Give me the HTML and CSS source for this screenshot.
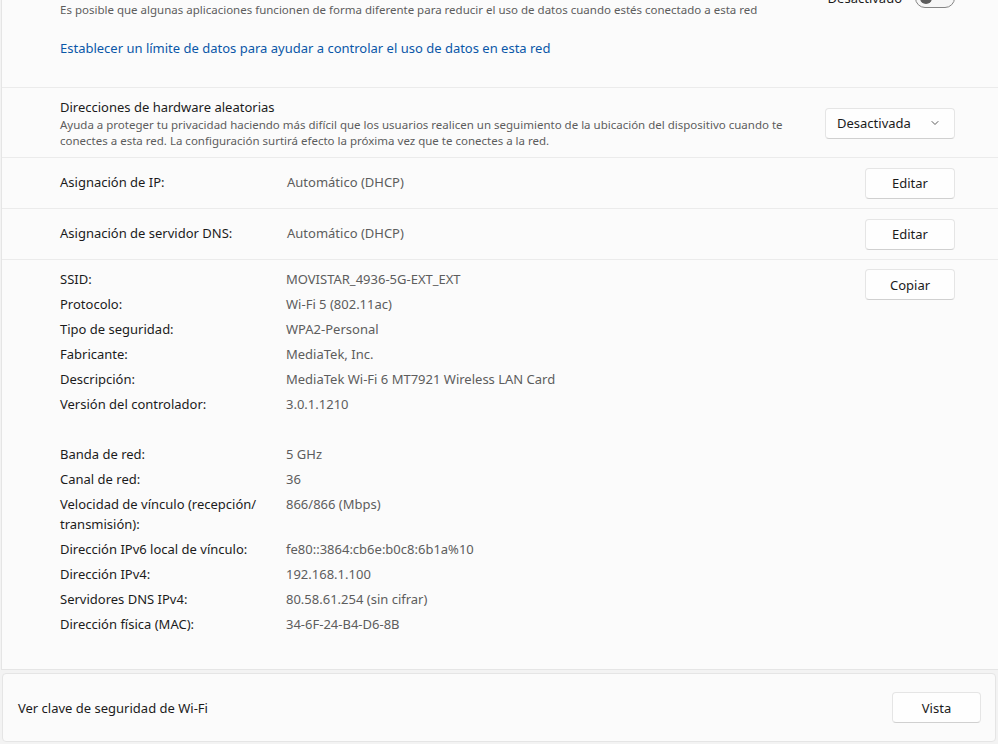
FILE: index.html
```html
<!DOCTYPE html>
<html lang="es">
<head>
  <meta charset="UTF-8" />
  <title>Propiedades de Wi-Fi</title>
  <link rel="stylesheet" href="styles.css">
</head>
<body>
  <div class="panel">
    <!-- Conexión de uso medido -->
    <section class="block metered">
      <div class="row-top">
        <div class="text">
          <div class="title">Conexión de uso medido</div>
          <div class="desc">Es posible que algunas aplicaciones funcionen de forma diferente para reducir el uso de datos cuando estés conectado a esta red</div>
        </div>
        <div class="toggle-wrap">
          <span>Desactivado</span>
          <span class="toggle"><span class="knob"></span></span>
        </div>
      </div>
      <a class="link" href="#">Establecer un límite de datos para ayudar a controlar el uso de datos en esta red</a>
    </section>

    <!-- Direcciones aleatorias -->
    <section class="block hw">
      <div class="text">
        <div class="title">Direcciones de hardware aleatorias</div>
        <div class="desc">Ayuda a proteger tu privacidad haciendo más difícil que los usuarios realicen un seguimiento de la ubicación del dispositivo cuando te<br>conectes a esta red. La configuración surtirá efecto la próxima vez que te conectes a la red.</div>
      </div>
      <button class="select">Desactivada
        <svg width="10" height="10" viewBox="0 0 10 10"><path d="M2 3.5 L5 6.5 L8 3.5" fill="none" stroke="#5d5d5d" stroke-width="1" stroke-linecap="round" stroke-linejoin="round"/></svg>
      </button>
    </section>

    <section class="block line">
      <span class="label">Asignación de IP:</span>
      <span class="value">Automático (DHCP)</span>
      <button class="btn">Editar</button>
    </section>

    <section class="block line">
      <span class="label">Asignación de servidor DNS:</span>
      <span class="value">Automático (DHCP)</span>
      <button class="btn">Editar</button>
    </section>

    <!-- Propiedades -->
    <section class="block props">
      <div class="grid">
        <span class="label">SSID:</span><span class="value">MOVISTAR_4936-5G-EXT_EXT</span>
        <span class="label">Protocolo:</span><span class="value">Wi-Fi 5 (802.11ac)</span>
        <span class="label">Tipo de seguridad:</span><span class="value">WPA2-Personal</span>
        <span class="label">Fabricante:</span><span class="value">MediaTek, Inc.</span>
        <span class="label">Descripción:</span><span class="value">MediaTek Wi-Fi 6 MT7921 Wireless LAN Card</span>
        <span class="label">Versión del controlador:</span><span class="value">3.0.1.1210</span>
        <span class="label spacer"></span><span class="value spacer"></span>
        <span class="label">Banda de red:</span><span class="value">5 GHz</span>
        <span class="label">Canal de red:</span><span class="value">36</span>
        <span class="label">Velocidad de vínculo (recepción/ transmisión):</span><span class="value">866/866 (Mbps)</span>
        <span class="label">Dirección IPv6 local de vínculo:</span><span class="value">fe80::3864:cb6e:b0c8:6b1a%10</span>
        <span class="label">Dirección IPv4:</span><span class="value">192.168.1.100</span>
        <span class="label">Servidores DNS IPv4:</span><span class="value">80.58.61.254 (sin cifrar)</span>
        <span class="label">Dirección física (MAC):</span><span class="value">34-6F-24-B4-D6-8B</span>
      </div>
      <button class="btn copy">Copiar</button>
    </section>
  </div>

  <div class="card">
    <span>Ver clave de seguridad de Wi-Fi</span>
    <button class="btn small">Vista</button>
  </div>
</body>
</html>
```

FILE: styles.css
```css
body {
  margin: 0;
  background: #f3f3f3;
  font-family: "Noto Sans", "Open Sans", sans-serif;
  font-size: 13px;
  color: #1b1b1b;
  overflow: hidden;
}

.panel {
  margin: -19px -2px 0 1px;
  background: #fbfbfb;
  border: 1px solid #e5e5e5;
}

.block {
  border-top: 1px solid #ebebeb;
  padding: 0 44px 0 58px;
}

.block:first-child {
  border-top: none;
}

.title {
  line-height: 20px;
}

.desc {
  font-size: 11.5px;
  line-height: 16px;
  color: #5d5d5d;
}

/* uso medido */
.metered {
  padding-bottom: 29px;
}

.row-top {
  display: flex;
  justify-content: space-between;
  align-items: flex-start;
}

.toggle-wrap {
  display: flex;
  align-items: center;
  gap: 13px;
  margin-top: 6px;
}

.toggle {
  box-sizing: border-box;
  width: 40px;
  height: 20px;
  border: 1px solid #858585;
  border-radius: 10px;
  background: #f6f6f6;
  display: flex;
  align-items: center;
  padding-left: 4px;
}

.knob {
  width: 12px;
  height: 12px;
  border-radius: 50%;
  background: #5d5d5d;
}

.link {
  display: block;
  margin-top: 20px;
  line-height: 20px;
  color: #0a57a8;
  text-decoration: none;
}

/* direcciones de hardware */
.hw {
  display: flex;
  justify-content: space-between;
  align-items: center;
  padding-top: 9px;
  padding-bottom: 8px;
}

.hw .desc {
  white-space: nowrap;
}

.select {
  box-sizing: border-box;
  width: 130px;
  height: 31px;
  padding: 0 14px 0 11px;
  display: flex;
  justify-content: space-between;
  align-items: center;
  font: inherit;
  color: #1b1b1b;
  background: #fefefe;
  border: 1px solid #e5e5e5;
  border-bottom-color: #d0d0d0;
  border-radius: 4px;
}

.btn {
  box-sizing: border-box;
  width: 90px;
  height: 31px;
  font: inherit;
  color: #1b1b1b;
  background: #fefefe;
  border: 1px solid #e5e5e5;
  border-bottom-color: #d0d0d0;
  border-radius: 4px;
}

/* filas de ip / dns */
.line {
  display: flex;
  align-items: center;
  height: 50px;
}

.line .label,
.line .value {
  margin-top: -2px;
}

.label {
  width: 210px;
  margin-right: 17px;
  flex-shrink: 0;
}

.value {
  color: #5d5d5d;
  flex: 1;
}

/* propiedades */
.props {
  display: flex;
  justify-content: space-between;
  align-items: flex-start;
  padding-top: 10px;
  padding-bottom: 35px;
}

.grid {
  display: grid;
  grid-template-columns: 210px auto;
  column-gap: 16px;
  row-gap: 5px;
  line-height: 20px;
  margin-top: -1px;
}

.grid .label {
  width: auto;
  margin: 0;
}

.spacer {
  height: 20px;
}

.btn.copy {
  margin-top: -1px;
}

/* tarjeta inferior */
.card {
  margin: 3px 2px 0 2px;
  height: 69px;
  box-sizing: border-box;
  display: flex;
  justify-content: space-between;
  align-items: center;
  padding: 0 14px 0 15px;
  background: #fbfbfb;
  border: 1px solid #e5e5e5;
  border-radius: 4px;
}

.btn.small {
  width: 89px;
}
```
